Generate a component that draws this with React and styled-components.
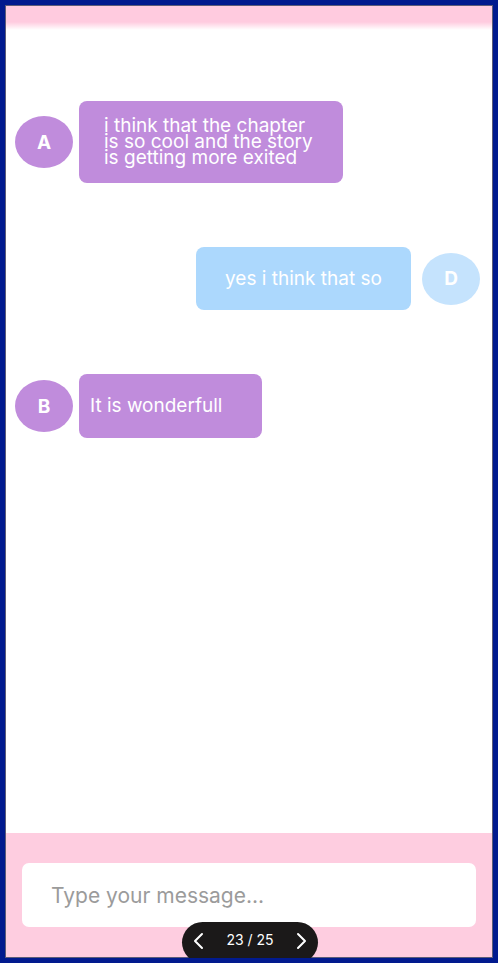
import React from "react";
import styled, { createGlobalStyle } from "styled-components";

const GlobalStyle = createGlobalStyle`
  body {
    margin: 0;
    font-family: Inter, "Noto Sans", sans-serif;
  }
`;

const Frame = styled.div`
  width: 498px;
  height: 963px;
  box-sizing: border-box;
  border: 5px solid #011a8e;
  overflow: hidden;
`;

const Panel = styled.div`
  height: 100%;
  box-sizing: border-box;
  border: 1px solid #5c5c78;
  background: #fff;
  display: flex;
  flex-direction: column;
`;

const Header = styled.div`
  height: 24px;
  flex-shrink: 0;
  background: linear-gradient(to bottom, #ffcbdf 0, #ffcbdf 16px, #ffffff 24px);
`;

const Messages = styled.div`
  flex: 1;
  display: flex;
  flex-direction: column;
  gap: 64px;
  padding-top: 71px;
`;

const Row = styled.div`
  display: flex;
  align-items: center;
  justify-content: ${(p) => (p.$mine ? "flex-end" : "flex-start")};
  gap: ${(p) => (p.$mine ? "11px" : "6px")};
  padding: ${(p) => (p.$mine ? "0 12px 0 0" : "0 0 0 9px")};
`;

const Avatar = styled.div`
  width: 58px;
  height: 52px;
  border-radius: 50%;
  background: ${(p) => p.$color};
  color: #fff;
  font-weight: 700;
  font-size: 19px;
  display: flex;
  align-items: center;
  justify-content: center;
  flex-shrink: 0;
`;

const Bubble = styled.div`
  box-sizing: border-box;
  width: ${(p) => p.$width}px;
  height: ${(p) => p.$height}px;
  border-radius: 8px;
  background: ${(p) => p.$color};
  color: #fff;
  font-size: 19px;
  line-height: ${(p) => (p.$tight ? "16px" : "22px")};
  display: flex;
  align-items: center;
  justify-content: ${(p) => (p.$center ? "center" : "flex-start")};
  padding-left: ${(p) => p.$pad}px;
`;

const Footer = styled.div`
  position: relative;
  height: 124px;
  flex-shrink: 0;
  background: #fecde0;
  padding: 30px 16px 0;
  box-sizing: border-box;
`;

const InputBox = styled.div`
  height: 64px;
  border-radius: 7px;
  background: #fff;
  display: flex;
  align-items: center;
  padding-left: 29px;
  font-size: 21px;
  color: #9b9b9b;
`;

const Pager = styled.div`
  position: absolute;
  left: 176px;
  bottom: -6px;
  width: 136px;
  height: 41px;
  border-radius: 21px;
  background: #1b1919;
  color: #fff;
  display: flex;
  align-items: flex-start;
  justify-content: space-between;
  padding: 10px 8px 0;
  box-sizing: border-box;
  font-size: 14px;
`;

const PagerText = styled.span`
  line-height: 16px;
`;

const Chevron = ({ dir }) => (
  <svg width="18" height="18" viewBox="0 0 18 18" fill="none">
    <path
      d={dir === "left" ? "M12 2 L5 9 L12 16" : "M6 2 L13 9 L6 16"}
      stroke="#fff"
      strokeWidth="2"
      strokeLinecap="round"
      strokeLinejoin="round"
    />
  </svg>
);

const PURPLE = "#c08cdc";

export default function App() {
  return (
    <Frame>
      <GlobalStyle />
      <Panel>
        <Header />
        <Messages>
          <Row>
            <Avatar $color={PURPLE}>A</Avatar>
            <Bubble $color={PURPLE} $width={264} $height={82} $pad={25} $tight>
              <div>
                i think that the chapter
                <br />
                is so cool and the story
                <br />
                is getting more exited
              </div>
            </Bubble>
          </Row>
          <Row $mine>
            <Bubble $color="#acd8fd" $width={215} $height={63} $center>
              yes i think that so
            </Bubble>
            <Avatar $color="#c5e3fd">D</Avatar>
          </Row>
          <Row>
            <Avatar $color={PURPLE}>B</Avatar>
            <Bubble $color={PURPLE} $width={183} $height={64} $pad={11}>
              It is wonderfull
            </Bubble>
          </Row>
        </Messages>
        <Footer>
          <InputBox>Type your message...</InputBox>
          <Pager>
            <Chevron dir="left" />
            <PagerText>23 / 25</PagerText>
            <Chevron dir="right" />
          </Pager>
        </Footer>
      </Panel>
    </Frame>
  );
}
